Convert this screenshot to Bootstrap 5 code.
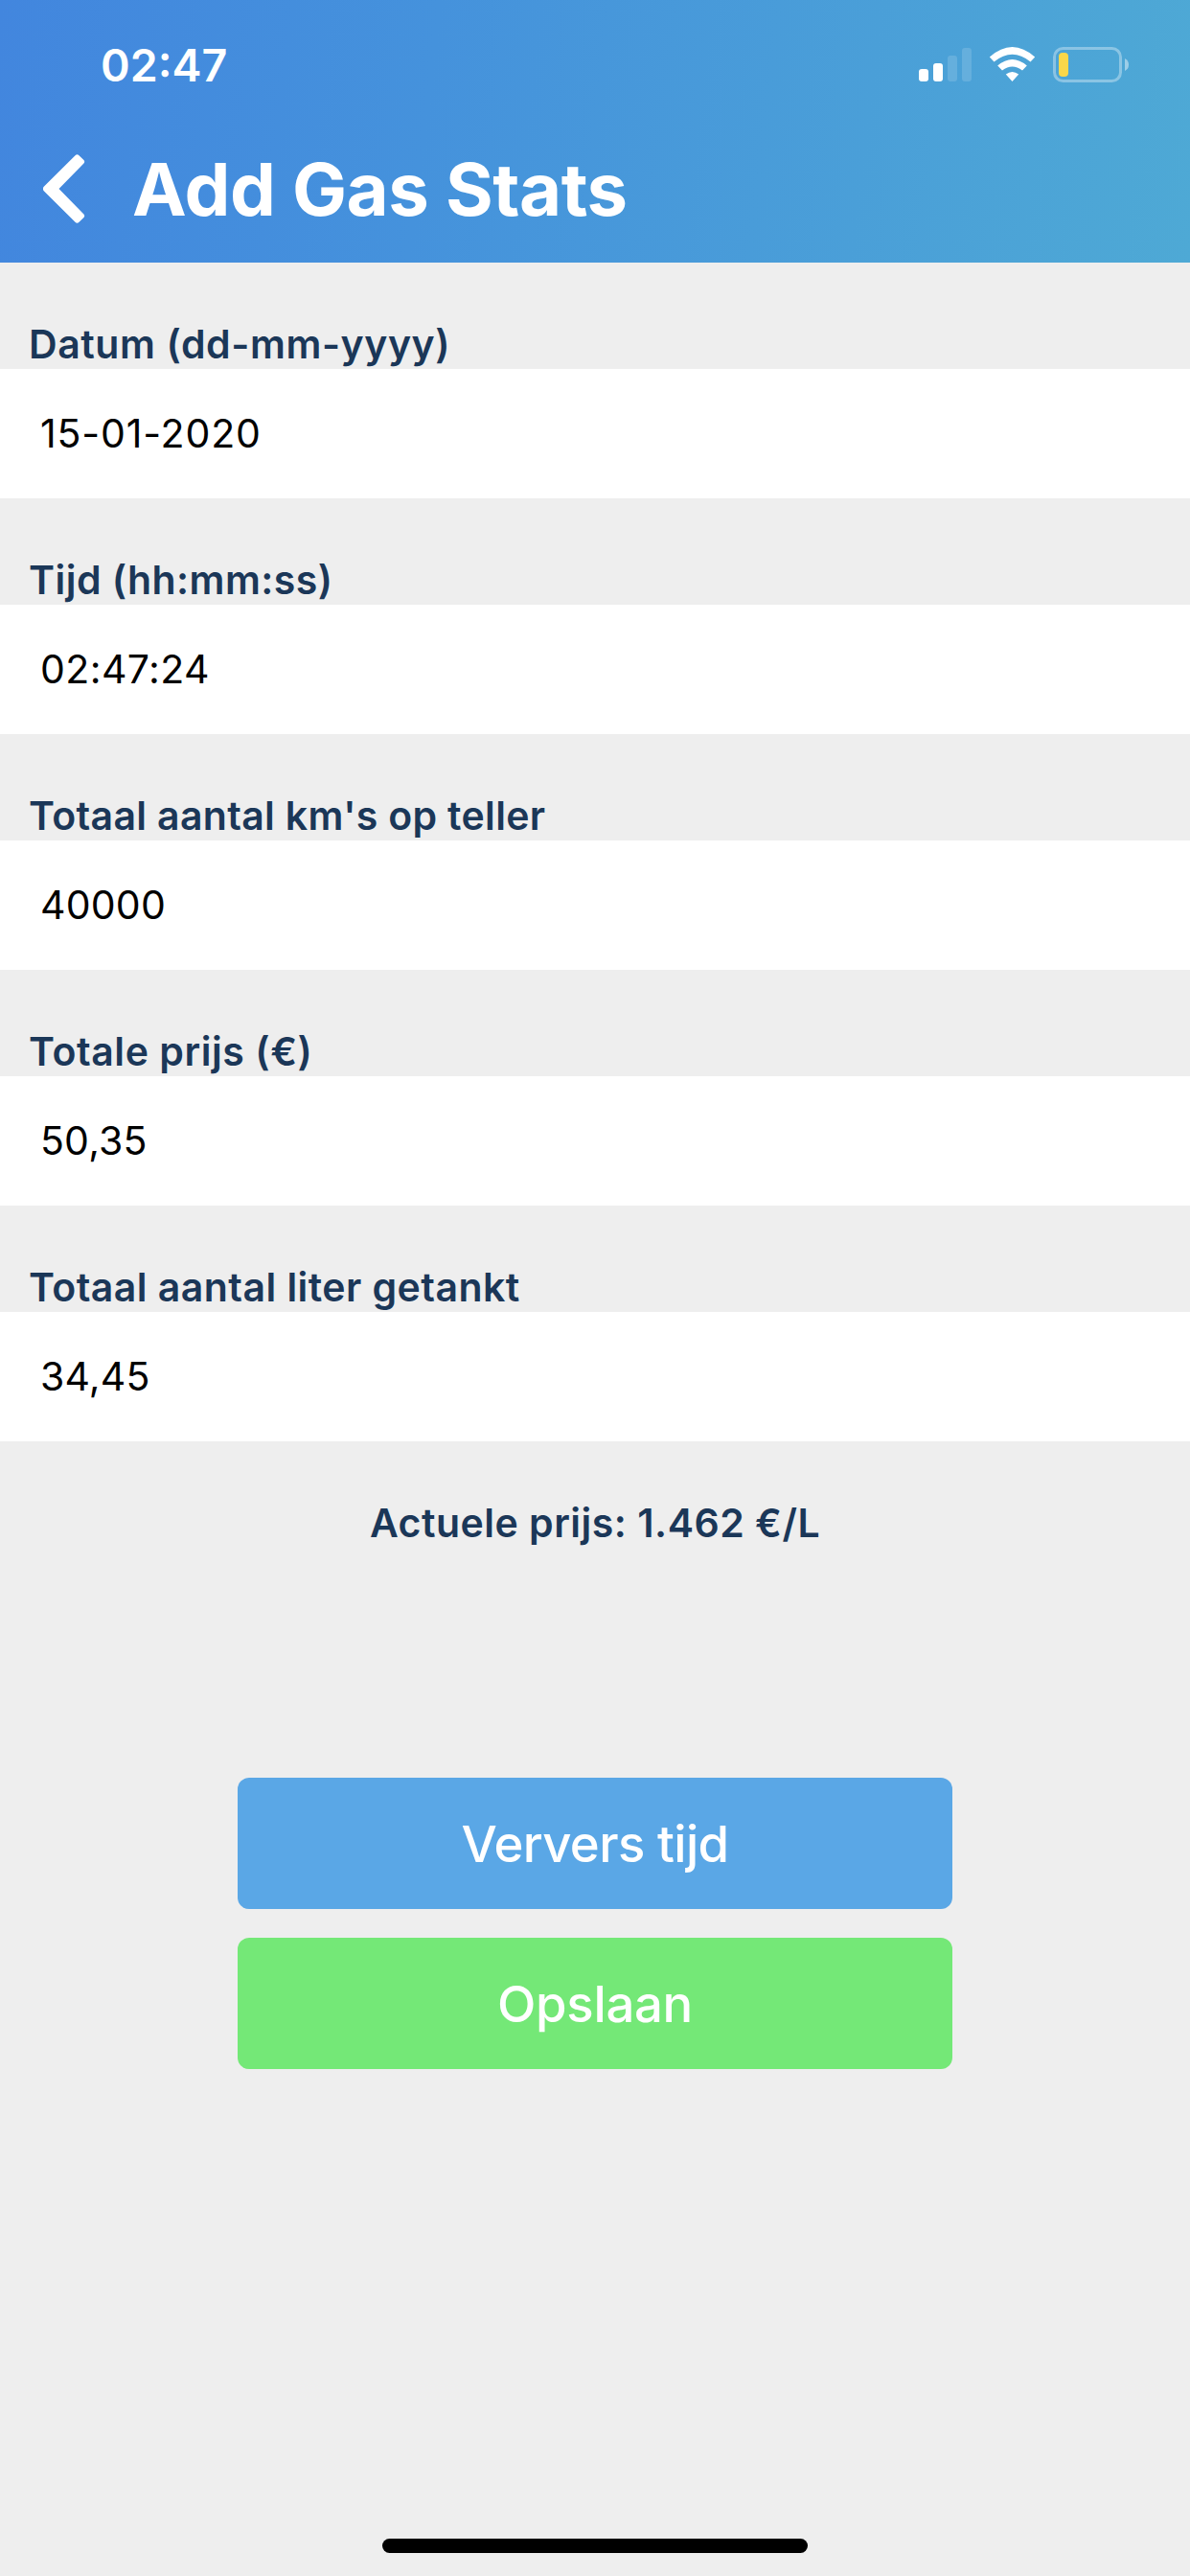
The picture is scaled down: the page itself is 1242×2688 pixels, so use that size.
<!DOCTYPE html>
<html lang="nl">
<head>
<meta charset="utf-8">
<meta name="viewport" content="width=device-width, initial-scale=1">
<title>Add Gas Stats</title>
<link href="https://cdn.jsdelivr.net/npm/bootstrap@5.3.0/dist/css/bootstrap.min.css" rel="stylesheet">
<style>
body { font-family: Inter, "Liberation Sans", sans-serif; background: #eee; height: 2688px; overflow: hidden; }
.app-head { height: 274px; background: linear-gradient(97deg, #4286de 0%, #4592dc 36%, #4ea9d5 100%); }
.status-bar { height: 122px; padding: 0 63px 0 105px; }
.clock { font-size: 46.5px; font-weight: 600; line-height: 56px; margin-top: 40px; }
.status-icons { margin-top: 49px; }
.title-bar { height: 152px; padding-left: 45px; }
.back-icon { margin-top: 39px; margin-right: 49px; }
.screen-title { font-size: 76px; font-weight: 700; line-height: 92px; margin-top: 29px; letter-spacing: -.45px; }
.field-label { height: 111px; padding-left: 30px; padding-top: 60px; font-size: 41px; line-height: 50px; font-weight: 600; color: #1b3758; letter-spacing: .45px; }
.field-value { height: 135px; padding: 42px 42px 0; font-size: 41px; line-height: 50px; color: #000; background: #fff; letter-spacing: .2px; }
.ls-date { letter-spacing: .85px; }
.ls-time { letter-spacing: .4px; }
.ls-tight { letter-spacing: .34px; }
.ls-wide { letter-spacing: .57px; }
.price { height: 351px; padding-top: 60px; font-size: 41px; line-height: 50px; font-weight: 600; color: #1b3758; letter-spacing: .5px; }
.actions { gap: 30px; }
.action-btn { width: 746px; height: 137px; border: 0; border-radius: 12px; font-size: 52.7px; line-height: 64px; font-weight: 500; color: #fff; }
.btn-refresh { background: #5aa7e6; letter-spacing: -.65px; }
.btn-save { background: #74e877; letter-spacing: -.3px; }
.home-bar { width: 444px; height: 15px; border-radius: 8px; background: #000; margin-bottom: 24px; }
</style>
</head>
<body class="d-flex flex-column">
<header class="app-head text-white">
  <div class="status-bar d-flex justify-content-between align-items-start">
    <div class="clock">02:47</div>
    <svg class="status-icons" width="221" height="38" viewBox="957 49 221 38">
      <g fill="#fff">
        <rect x="958" y="72" width="10" height="13" rx="3"/>
        <rect x="973" y="66" width="10" height="19" rx="3"/>
        <g fill-opacity=".15"><rect x="988" y="58" width="10" height="27" rx="3"/><rect x="1003" y="50" width="10" height="35" rx="3"/></g>
        <path d="M1031.800 59.500Q1055.500 38.500 1079.200 59.500L1074.500 64.500Q1055.500 49 1036.500 64.500Z"/>
        <path d="M1040.200 68.500Q1055.500 55.500 1070.800 68.500L1066 73.500Q1055.500 65.500 1045 73.500Z"/>
        <path d="M1048.800 77.500Q1055.500 72.500 1062.200 77.500L1055.500 85Z"/>
        <path fill-opacity=".45" d="M1173 61Q1177 63 1177 67.500T1173 74Z"/>
      </g>
      <rect x="1099.500" y="50.500" width="69" height="34" rx="9" fill="none" stroke="#fff" stroke-opacity=".35" stroke-width="3"/>
      <rect x="1104" y="55" width="10" height="25" rx="4" fill="#f9d749"/>
    </svg>
  </div>
  <div class="title-bar d-flex align-items-start">
    <svg class="back-icon" width="44" height="72" viewBox="0 0 44 72" fill="#fff"><path d="M1 33.500L33.500 1.200Q35.500-.8 37.500 1.200L42.200 5.800Q44.200 7.800 42.200 9.800L16.500 36L42.200 62.200Q44.200 64.200 42.200 66.200L37.500 70.800Q35.500 72.800 33.500 70.800L1 38.500Q-1.300 36 1 33.500Z"/></svg>
    <h1 class="screen-title mb-0">Add Gas Stats</h1>
  </div>
</header>
<main class="flex-grow-1 d-flex flex-column">
  <div class="field-label ls-wide">Datum (dd-mm-yyyy)</div>
  <div class="field-value ls-date">15-01-2020</div>
  <div class="field-label">Tijd (hh:mm:ss)</div>
  <div class="field-value ls-time">02:47:24</div>
  <div class="field-label ls-tight">Totaal aantal km's op teller</div>
  <div class="field-value">40000</div>
  <div class="field-label ls-wide">Totale prijs (€)</div>
  <div class="field-value">50,35</div>
  <div class="field-label">Totaal aantal liter getankt</div>
  <div class="field-value">34,45</div>
  <div class="price text-center">Actuele prijs: 1.462 €/L</div>
  <div class="actions d-flex flex-column align-items-center">
    <button type="button" class="btn action-btn btn-refresh">Ververs tijd</button>
    <button type="button" class="btn action-btn btn-save">Opslaan</button>
  </div>
</main>
<footer class="d-flex justify-content-center"><div class="home-bar"></div></footer>
<script src="https://cdn.jsdelivr.net/npm/bootstrap@5.3.0/dist/js/bootstrap.bundle.min.js"></script>
</body>
</html>
